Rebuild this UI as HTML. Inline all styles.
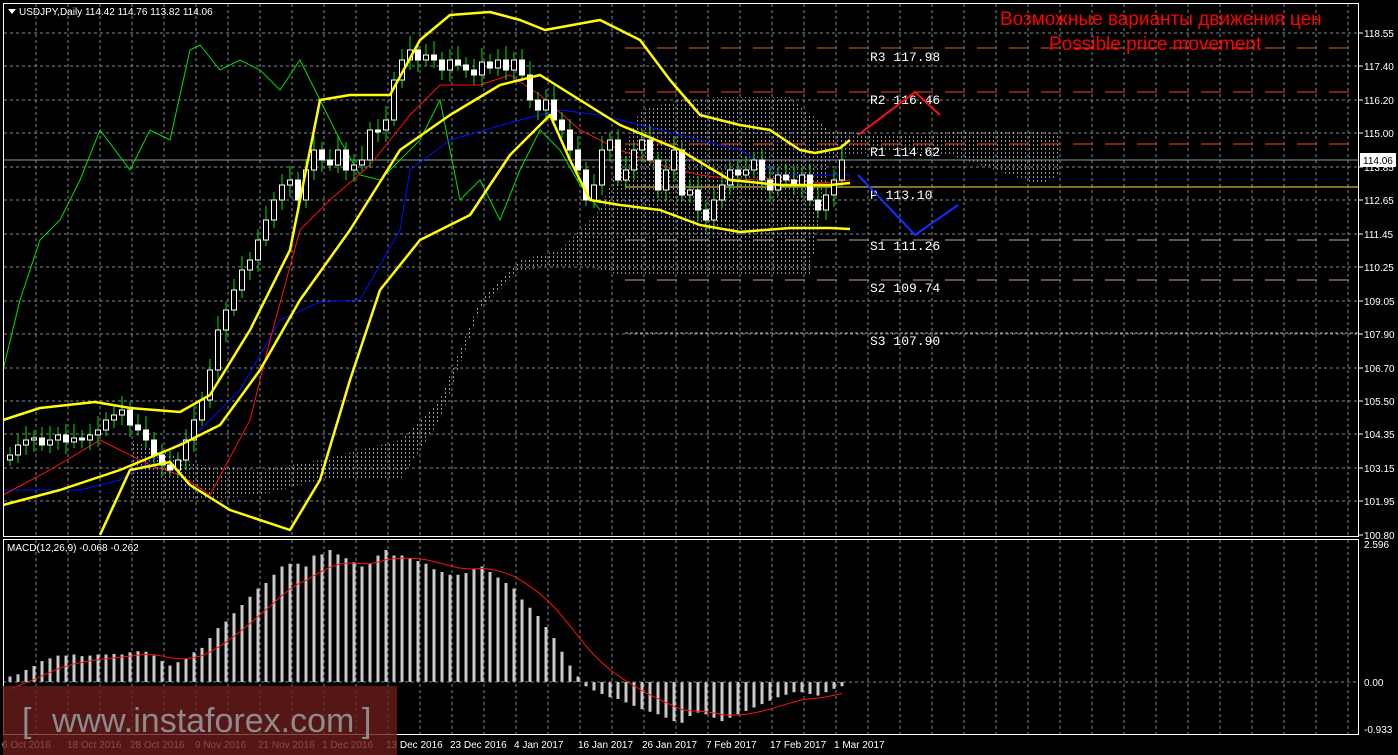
<!DOCTYPE html>
<html><head><meta charset="utf-8"><style>
html,body{margin:0;padding:0;background:#000;width:1398px;height:755px;overflow:hidden}
svg{display:block}
text{font-family:"Liberation Sans",sans-serif}
text.mono{font-family:"Liberation Mono",monospace;font-size:13px}
</style></head><body>
<svg id="s" width="1398" height="755" xmlns="http://www.w3.org/2000/svg">
<defs>
<pattern id="dots" width="4" height="4" patternUnits="userSpaceOnUse"><rect x="1" y="0" width="1" height="2" fill="#c8c8c8"/></pattern>
</defs>
<rect width="1398" height="755" fill="#000"/>
<g id="grid" stroke="#7d8791" stroke-dasharray="3,3" stroke-width="1"></g>
<polygon points="130,440 200,465 260,470 320,460 400,440 440,400 480,300 520,260 560,250 600,210 640,110 680,100 720,97 790,97 830,130 880,135 1000,130 1060,133 1060,175 1040,185 950,155 880,150 830,160 810,275 700,275 620,275 580,265 520,270 480,310 440,420 400,480 320,480 260,495 200,500 130,500" fill="url(#dots)" opacity="0.7"/>
<line x1="625" y1="48" x2="1358" y2="48" stroke="#e05020" stroke-dasharray="20,12" stroke-width="1"/>
<line x1="625" y1="92" x2="1358" y2="92" stroke="#ff4010" stroke-dasharray="20,12" stroke-width="1"/>
<line x1="625" y1="144" x2="1358" y2="144" stroke="#ff4010" stroke-dasharray="20,12" stroke-width="1"/>
<line x1="3" y1="160" x2="1358" y2="160" stroke="#8a98a8" stroke-width="1"/>
<line x1="625" y1="187" x2="1358" y2="187" stroke="#ffe040" stroke-width="1"/>
<line x1="625" y1="240" x2="1358" y2="240" stroke="#c8a0a0" stroke-dasharray="20,12" stroke-width="1"/>
<line x1="625" y1="280" x2="1358" y2="280" stroke="#c8a0a0" stroke-dasharray="20,12" stroke-width="1"/>
<line x1="625" y1="333" x2="1358" y2="333" stroke="#c8a0a0" stroke-dasharray="3,2" stroke-width="1"/>
<g fill="#fff">
<text class="mono" x="870" y="61">R3 117.98</text><text class="mono" x="870" y="104">R2 116.46</text><text class="mono" x="870" y="156">R1 114.62</text>
<text class="mono" x="870" y="199">P  113.10</text><text class="mono" x="870" y="250">S1 111.26</text><text class="mono" x="870" y="292">S2 109.74</text><text class="mono" x="870" y="345">S3 107.90</text>
</g>
<g fill="none" stroke-width="1">
<polyline stroke="#00e000" points="3,370 20,300 40,240 60,220 80,180 100,130 130,170 150,130 170,140 190,50 200,45 220,70 240,60 260,70 280,90 300,60 320,100 340,140 360,175 380,180 400,160 420,140 440,100 460,200 480,180 500,220 520,170 540,130 560,150 580,185 600,210"/>
<polyline stroke="#0010ff" points="3,490 80,490 120,480 200,430 240,390 280,320 320,302 360,300 400,230 410,170 450,140 520,120 560,110 600,115 640,125 700,140 740,150 780,175 820,175 850,175"/>
<polyline stroke="#ff1010" points="3,495 50,470 100,440 150,465 180,475 210,495 250,420 270,340 300,230 330,200 370,165 410,115 440,85 480,85 510,75 540,95 580,130 620,150 660,165 700,175 740,180 780,178 820,183 850,180"/>
</g>
<g id="candles"></g>
<g fill="none" stroke="#ffff00" stroke-width="2.5" stroke-linejoin="round">
<polyline points="3,420 40,408 95,402 130,408 180,412 210,395 250,330 290,250 320,100 350,95 390,95 420,40 450,15 490,12 520,20 545,30 600,20 640,40 670,80 700,115 740,125 770,130 800,150 815,153 840,148 850,140"/>
<polyline points="3,505 60,490 120,470 180,445 220,425 260,370 300,300 350,230 400,150 450,115 500,85 540,75 580,100 620,125 680,150 730,180 780,185 830,185 850,183"/>
<polyline points="100,535 130,470 170,462 190,485 230,510 290,530 320,480 350,380 380,290 420,240 470,215 510,155 550,115 570,160 590,200 620,205 660,210 700,225 740,232 790,228 830,228 850,229"/>
</g>
<polyline points="858,135 915,92 940,115" fill="none" stroke="#ff1010" stroke-width="2"/>
<polyline points="858,175 915,235 958,205" fill="none" stroke="#1030ff" stroke-width="2"/>
<text x="1000" y="25" font-size="19" fill="#ff0000">Возможные варианты движения цен</text>
<text x="1049" y="50" font-size="19" fill="#ff0000">Possible price movement</text>
<g id="macd"></g>
<line x1="3" y1="682" x2="1358" y2="682" stroke="#7d8791" stroke-dasharray="3,3"/>
<rect x="3.5" y="3.5" width="1355" height="533" fill="none" stroke="#fff"/>
<rect x="3.5" y="539.5" width="1355" height="195" fill="none" stroke="#fff"/>
<path d="M8 9 L16 9 L12 14Z" fill="#fff"/>
<text x="19" y="15" font-size="10" fill="#fff">USDJPY,Daily  114.42 114.76 113.82 114.06</text>
<text x="7" y="551" font-size="10" fill="#fff">MACD(12,26,9) -0.068 -0.262</text>
<g id="axis" font-size="10" fill="#fff"></g>
<rect x="3" y="686" width="394" height="69" fill="#6a1c1c" opacity="0.8"/>
<text x="22" y="732" font-size="34" fill="#8c8c8c">[</text>
<text x="52" y="732" font-size="34" fill="#8c8c8c">www.instaforex.com</text>
<text x="362" y="732" font-size="34" fill="#8c8c8c">]</text>
<rect x="1360" y="153" width="36" height="14" fill="#fff"/>
<text x="1363" y="164" font-size="10" fill="#000">114.06</text>
</svg>
<script>
(function(){
var NS="http://www.w3.org/2000/svg";
function el(p,t,a){var e=document.createElementNS(NS,t);for(var k in a)e.setAttribute(k,a[k]);p.appendChild(e);return e;}
var g=document.getElementById('grid');
for(var x=36;x<1358;x+=32){el(g,'line',{x1:x,y1:4,x2:x,y2:536});el(g,'line',{x1:x,y1:540,x2:x,y2:734});}
var labs=["118.55","117.40","116.20","115.00","113.85","112.65","111.45","110.25","109.05","107.90","106.70","105.50","104.35","103.15","101.95","100.80"];
var ax=document.getElementById('axis');
for(var i=0;i<16;i++){var y=Math.round(33+i*33.45);if(i<15)el(g,'line',{x1:4,y1:y,x2:1358,y2:y});el(ax,'line',{x1:1359,y1:y,x2:1363,y2:y,stroke:'#fff'});var t=el(ax,'text',{x:1364,y:y+4});t.textContent=labs[i];}
[["2.596",548],["0.00",686],["-0.933",733]].forEach(function(a){var t=el(ax,'text',{x:1364,y:a[1]});t.textContent=a[0];});
var dates=[["6 Oct 2016",2],["18 Oct 2016",67],["28 Oct 2016",130],["9 Nov 2016",195],["21 Nov 2016",258],["1 Dec 2016",322],["13 Dec 2016",386],["23 Dec 2016",450],["4 Jan 2017",514],["16 Jan 2017",578],["26 Jan 2017",642],["7 Feb 2017",706],["17 Feb 2017",770],["1 Mar 2017",834]];
dates.forEach(function(d){var t=el(ax,'text',{x:d[1],y:748});t.textContent=d[0];});
var c=[455,445,440,438,445,440,435,442,438,440,435,430,420,415,410,425,430,440,455,465,470,460,440,420,400,370,330,310,290,270,260,240,220,200,185,180,200,170,150,160,165,150,170,165,160,130,130,120,80,60,50,60,55,60,70,60,65,70,75,62,68,60,70,60,75,100,110,100,120,130,150,170,200,185,150,140,180,170,150,140,160,190,170,150,195,190,210,220,200,185,170,175,170,160,180,190,175,180,185,175,200,210,195,180,160];
var cg=document.getElementById('candles');
for(var i=0;i<c.length;i++){var x=10+8*i,o=i?c[i-1]:460,cl=c[i];var ty=Math.min(o,cl),by=Math.max(o,cl);if(by-ty<2)by=ty+2;
el(cg,'line',{x1:x,y1:ty-8-(i%3)*3,x2:x,y2:by+6+(i%4)*2,stroke:'#00e000'});
el(cg,'rect',{x:x-2.5,y:ty,width:5,height:by-ty,fill:cl<o?'#000':'#fff',stroke:'#fff','stroke-width':1});}
var m=[10,14,22,29,38,43,48,48,50,47,48,50,50,51,50,54,56,55,48,38,30,36,42,54,62,80,98,110,125,140,155,170,180,195,210,215,215,210,230,232,240,232,225,218,210,215,230,240,230,230,225,220,215,205,200,195,195,198,205,210,200,190,180,170,150,135,120,100,80,55,30,10,-5,-10,-14,-18,-20,-24,-28,-32,-35,-38,-42,-46,-48,-40,-36,-38,-42,-46,-42,-38,-34,-30,-26,-22,-18,-15,-12,-12,-14,-16,-12,-8,-5];
var mg=document.getElementById('macd');var sig=-10,pts=[];
for(var i=0;i<m.length;i++){var h=m[i]>0?m[i]*0.55:m[i]*0.85;var x=10+8*i;
el(mg,'rect',{x:x-1.5,y:h>0?682-h:682,width:3,height:Math.abs(h),fill:'#c8c8c8'});
sig=sig+(h-sig)*0.2;pts.push(x+','+(682-sig).toFixed(1));}
el(mg,'polyline',{points:pts.join(' '),fill:'none',stroke:'#ff1010','stroke-width':1});
})();
</script>
</body></html>
